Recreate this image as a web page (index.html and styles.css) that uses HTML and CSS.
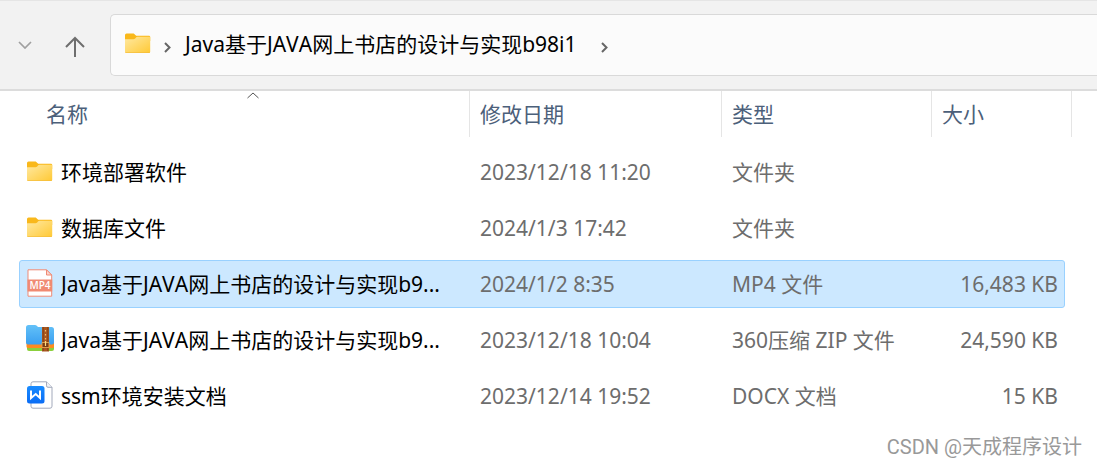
FILE: index.html
```html
<!DOCTYPE html>
<html lang="zh-CN">
<head>
<meta charset="utf-8">
<title>Java基于JAVA网上书店的设计与实现b98i1</title>
<link rel="stylesheet" href="styles.css">
</head>
<body>
<svg class="defs" aria-hidden="true">
  <defs>
    <linearGradient id="folder-front" x1="0" y1="0" x2="1" y2="1">
      <stop offset="0" stop-color="#ffe9a2"/>
      <stop offset="1" stop-color="#ffc935"/>
    </linearGradient>
    <linearGradient id="zip-front" x1="0" y1="0" x2="0" y2="1">
      <stop offset="0" stop-color="#63c1f8"/>
      <stop offset="1" stop-color="#3a9ff0"/>
    </linearGradient>
    <linearGradient id="doc-badge" x1="0" y1="0" x2="0" y2="1">
      <stop offset="0" stop-color="#1a8cff"/>
      <stop offset="1" stop-color="#0a6cf5"/>
    </linearGradient>
    <symbol id="folder" viewBox="0 0 26 20">
      <path d="M0 2a1.500 1.500 0 0 1 1.500-1.500h7.200l2.500 2.300H24a1.200 1.200 0 0 1 1.200 1.200V8H0z" fill="#f9b81b"/>
      <path d="M0 6.200h8.500q1 0 1.700-.8l1-1.100q.5-.6 1.300-.6H25.200v15a1.200 1.200 0 0 1-1.200 1.200H1.200A1.200 1.200 0 0 1 0 18.700z" fill="url(#folder-front)"/>
      <path d="M.3 19.600H24.900" stroke="#f3bc3a" stroke-width=".7"/>
    </symbol>
  </defs>
</svg>
<header class="toolbar">
  <button class="nav recent" type="button" aria-label="最近的位置">
    <svg width="14" height="8" viewBox="0 0 14 8" fill="none" stroke="#a0a0a0" stroke-width="1.700"><path d="M1 1l6 6 6-6"/></svg>
  </button>
  <button class="nav up" type="button" aria-label="向上">
    <svg width="20" height="22" viewBox="0 0 20 22" fill="none" stroke="#6e6e6e" stroke-width="2"><path d="M10 21V2M1 11l9-9 9 9"/></svg>
  </button>
  <nav class="address" aria-label="地址">
    <svg class="folder-icon" width="26" height="20"><use href="#folder"/></svg>
    <svg class="chevron" width="7" height="11" viewBox="0 0 7 11" fill="none" stroke="#666" stroke-width="2"><path d="M1 1l4.500 4.500L1 10"/></svg>
    <a class="crumb" href="#">Java基于JAVA网上书店的设计与实现b98i1</a>
    <svg class="chevron" width="7" height="11" viewBox="0 0 7 11" fill="none" stroke="#666" stroke-width="2"><path d="M1 1l4.500 4.500L1 10"/></svg>
  </nav>
</header>
<main>
  <table class="files">
    <thead>
      <tr>
        <th scope="col" aria-sort="ascending">名称
          <svg class="sort" width="12" height="7" viewBox="0 0 12 7" fill="none" stroke="#555"><path d="M.5 6L6 1l5.500 5"/></svg>
        </th>
        <th scope="col">修改日期</th>
        <th scope="col">类型</th>
        <th scope="col">大小</th>
      </tr>
    </thead>
    <tbody>
      <tr>
        <td class="name"><span class="icon"><svg width="26" height="20"><use href="#folder"/></svg></span><span class="label">环境部署软件</span></td>
        <td>2023/12/18 11:20</td><td>文件夹</td><td class="size"></td>
      </tr>
      <tr>
        <td class="name"><span class="icon"><svg width="26" height="20"><use href="#folder"/></svg></span><span class="label">数据库文件</span></td>
        <td>2024/1/3 17:42</td><td>文件夹</td><td class="size"></td>
      </tr>
      <tr class="selected">
        <td class="name"><span class="icon"><svg width="26" height="28" viewBox="0 0 26 28">
          <path d="M1 .8h18.500L24.700 6v21.200H1z" fill="#fff" stroke="#ef8b76" stroke-width="1"/>
          <path d="M19.500.8V6h5.200z" fill="#fbd5cc" stroke="#ef8b76"/>
          <path d="M.5 10.500h24.700v12H.5z" fill="#f08a72"/>
          <text x="13" y="20" class="badge">MP4</text>
        </svg></span><span class="label">Java基于JAVA网上书店的设计与实现b9...</span></td>
        <td>2024/1/2 8:35</td><td>MP4 文件</td><td class="size">16,483 KB</td>
      </tr>
      <tr>
        <td class="name"><span class="icon"><svg width="28" height="28" viewBox="0 0 28 28">
          <path d="M1 16h27v8a2 2 0 0 1-2 2H3a2 2 0 0 1-2-2z" fill="#8bcf3c"/>
          <path d="M.5 14H28v7.500a1.500 1.500 0 0 1-1.500 1.500H2A1.500 1.500 0 0 1 .5 21.500z" fill="#ff8a1e"/>
          <path d="M0 2.500A2.500 2.500 0 0 1 2.500 0H9q1 0 1.800.8L12 2h13.500A2.500 2.500 0 0 1 28 4.500v13a2 2 0 0 1-2 2H2a2 2 0 0 1-2-2z" fill="url(#zip-front)"/>
          <path d="M16 2h7v24.500h-7z" fill="#a8571f"/>
          <path d="M17.200 2v24M21.800 2v24" stroke="#7c3b12" stroke-width=".8"/>
          <path d="M19.500 5v1.500M19.500 9v1.500M19.500 13v1.500" stroke="#f0c070" stroke-width="1.200"/>
          <path d="M16 17.500h7v5h-7z" fill="#7c3b12" stroke="#e4a850" stroke-width=".9"/>
          <path d="M19.500 16v5" stroke="#ffdc80" stroke-width="1.200"/>
        </svg></span><span class="label">Java基于JAVA网上书店的设计与实现b9...</span></td>
        <td>2023/12/18 10:04</td><td>360压缩 ZIP 文件</td><td class="size">24,590 KB</td>
      </tr>
      <tr>
        <td class="name"><span class="icon"><svg width="26" height="28" viewBox="0 0 26 28">
          <path d="M6 .8h13.500L25 6.300v18.900a2 2 0 0 1-2 2H6a2 2 0 0 1-2-2V2.800a2 2 0 0 1 2-2z" fill="#fff" stroke="#a2a9bb"/>
          <path d="M19.500.8v4a1.500 1.500 0 0 0 1.500 1.500h4" fill="#eef0f5" stroke="#a2a9bb"/>
          <rect x="0" y="5" width="17.500" height="17.500" rx="2.500" fill="url(#doc-badge)"/>
          <path d="M4 9.500v7.500l4.700-4 4.300 4V9.500" fill="none" stroke="#fff" stroke-width="2"/>
        </svg></span><span class="label">ssm环境安装文档</span></td>
        <td>2023/12/14 19:52</td><td>DOCX 文档</td><td class="size">15 KB</td>
      </tr>
    </tbody>
  </table>
</main>
<footer class="watermark">CSDN @天成程序设计</footer>
</body>
</html>
```
FILE: styles.css
```css
* { box-sizing: border-box; }

body {
  margin: 0;
  background: #fff;
  color: #000;
  font: 21px/28px "Noto Sans", "Noto Sans CJK SC", sans-serif;
  font-kerning: none;
}

.defs { position: absolute; width: 0; height: 0; }

svg { display: block; flex: none; }

.toolbar {
  display: flex;
  align-items: center;
  padding: 13px 0 13px 10px;
  background: #f2f2f2;
  border-top: 1px solid #e5e5e5;
  border-bottom: 2px solid #dcdcdc;
}

.nav {
  display: grid;
  place-items: center;
  height: 40px;
  padding: 0;
  border: 0;
  background: none;
}

.recent { width: 30px; }
.up { width: 50px; margin: 4px 10px 0; }

.address {
  flex: 1;
  display: flex;
  align-items: center;
  height: 62px;
  padding-left: 14px;
  background: #fbfbfb;
  border: 1px solid #d9d9d9;
  border-right: 0;
  border-radius: 5px 0 0 5px;
}

.folder-icon { margin: 0 13px 4px 0; }
.chevron { margin-top: 4px; }

.crumb {
  margin: 0 24px 2px 14px;
  color: inherit;
  text-decoration: none;
  white-space: nowrap;
}

.files, .files thead, .files tbody { display: block; }

.files tr {
  display: grid;
  grid-template-columns: minmax(0, 1fr) 252px 210px 140px;
  margin: 0 25px 0 19px;
}

.files thead tr { margin-left: 36px; }

.files th {
  position: relative;
  height: 46px;
  padding: 9px 10px;
  border-right: 1px solid #e5e5e5;
  color: #4c607a;
  font-weight: 400;
  text-align: left;
}

.sort {
  position: absolute;
  top: 1px;
  left: 50%;
  translate: -50%;
}

.files tbody {
  display: grid;
  gap: 8px;
  padding-top: 11px;
}

.files tbody tr {
  grid-template-columns: minmax(0, 1fr) 252px 210px 133px;
  align-items: center;
  height: 48px;
  margin-right: 32px;
  border: 1px solid transparent;
  border-radius: 3px;
}

.files tbody .selected {
  background: #cce8ff;
  border-color: #99d1ff;
}

.files td {
  padding: 0 0 0 11px;
  color: #6d6d6d;
  white-space: nowrap;
}

.files .name {
  display: flex;
  align-items: center;
  padding: 0 10px 0 6px;
  color: #000;
}

.icon {
  flex: none;
  display: grid;
  justify-items: center;
  width: 28px;
  margin: 0 7px 2px 0;
}

.label {
  overflow: hidden;
  text-overflow: ellipsis;
}

.files .size { padding-right: 6px; text-align: right; }

.badge {
  fill: #fff;
  font: 600 10px "Open Sans", sans-serif;
  text-anchor: middle;
}

.watermark {
  padding: 13px 15px 0;
  color: #999;
  font: 20px/28px Roboto, "Noto Sans CJK SC", sans-serif;
  text-align: right;
}
```
